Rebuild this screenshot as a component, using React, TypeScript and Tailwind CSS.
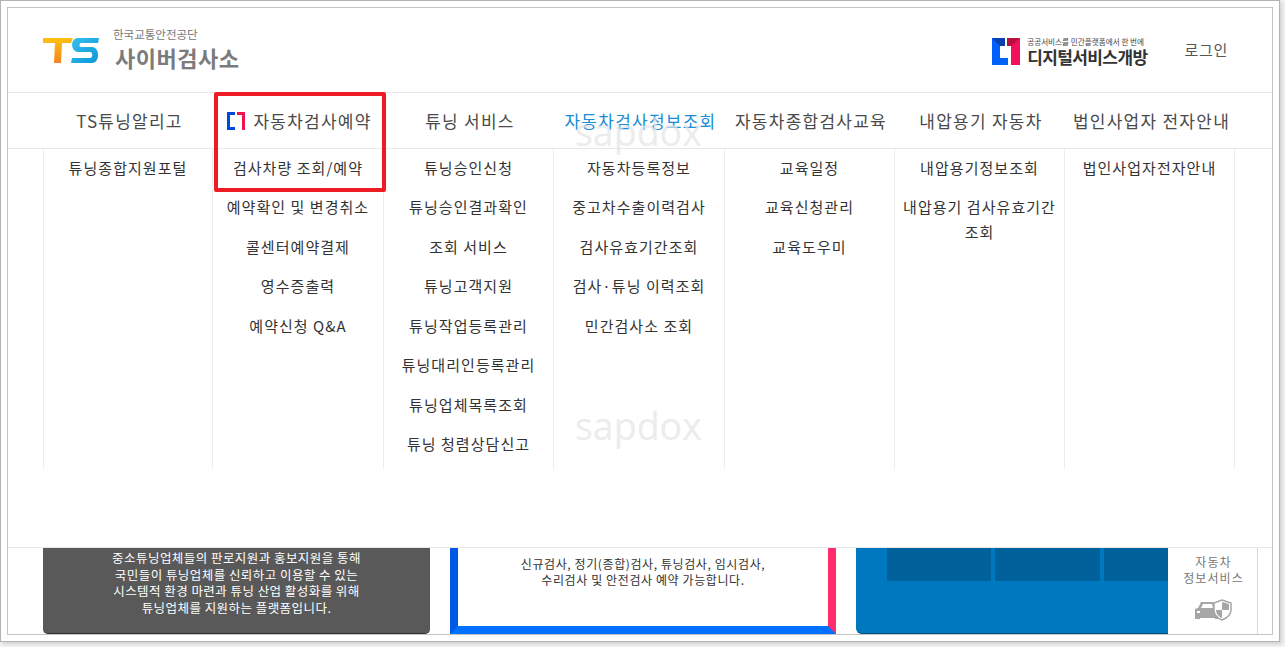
import React from 'react';

const columns = [
  { title: 'TS튜닝알리고', items: ['튜닝종합지원포털'] },
  {
    title: '자동차검사예약',
    items: ['검사차량 조회/예약', '예약확인 및 변경취소', '콜센터예약결제', '영수증출력', '예약신청 Q&A'],
  },
  {
    title: '튜닝 서비스',
    items: ['튜닝승인신청', '튜닝승인결과확인', '조회 서비스', '튜닝고객지원', '튜닝작업등록관리', '튜닝대리인등록관리', '튜닝업체목록조회', '튜닝 청렴상담신고'],
  },
  {
    title: '자동차검사정보조회',
    items: ['자동차등록정보', '중고차수출이력검사', '검사유효기간조회', '검사·튜닝 이력조회', '민간검사소 조회'],
  },
  { title: '자동차종합검사교육', items: ['교육일정', '교육신청관리', '교육도우미'] },
  { title: '내압용기 자동차', items: ['내압용기정보조회', '내압용기 검사유효기간 조회'] },
  { title: '법인사업자 전자안내', items: ['법인사업자전자안내'] },
];

const TsLogo = () => (
  <svg width="56" height="25" viewBox="0 0 56 25" className="shrink-0">
    <defs>
      <linearGradient id="tsT" x1="0" y1="0" x2="0" y2="1">
        <stop offset="0" stopColor="#ffc20e" />
        <stop offset="1" stopColor="#f5821f" />
      </linearGradient>
      <linearGradient id="tsS" x1="0" y1="0" x2="1" y2="1">
        <stop offset="0" stopColor="#39c0ee" />
        <stop offset="1" stopColor="#0a96d8" />
      </linearGradient>
    </defs>
    <path d="M0 0h30l-2 5h-9l-1 20h-7l1-20H0z" fill="url(#tsT)" />
    <path d="M35 0h21l-1 5H38c-2 0-2 4 0 4h11c8 0 8 16 0 16H28l1-5h18c3 0 3-6 0-6H36C27 14 27 0 35 0z" fill="url(#tsS)" />
  </svg>
);

const DigitalLogo = () => (
  <svg width="28" height="27" viewBox="0 0 28 27" className="shrink-0">
    <path d="M0 0h13v8H8v12h8v7H0z" fill="#0061ff" />
    <path d="M0 0h13v8H8z" fill="#0a3fb0" />
    <path d="M15 0h13v27H19V8h-4z" fill="#f2105a" />
    <path d="M15 0h13l-9 8h-4z" fill="#b8103f" />
  </svg>
);

const CarShield = () => (
  <svg width="37" height="22" viewBox="0 0 37 22">
    <path d="M0 10l3-1 3-6h13l2 3c-2 4-1 9 3 13v1H20v-1H5v1H0z" fill="#a6a6a6" />
    <path d="M8 5h9l1 4H6z" fill="#fff" />
    <path d="M2 12h3v2H2z" fill="#fff" />
    <path d="M27 1l9 3v7c0 5-4 8-9 10-5-2-8-5-8-10V4z" fill="#fff" stroke="#a6a6a6" strokeWidth="1.5" />
    <path d="M27 3l7 2v6h-7zM27 11v8c-3-1-6-4-6-8z" fill="#a6a6a6" />
  </svg>
);

export default function App() {
  return (
    <div className="relative h-[647px] w-[1285px] overflow-hidden bg-[#f3f3f3] font-['Noto_Sans_CJK_KR','Noto_Sans',sans-serif]">
      <div className="h-[642px] w-[1280px] border border-[#b4b4b4] bg-white p-[6px] shadow-[2px_2px_4px_rgba(0,0,0,0.15)]">
        <div className="flex h-full flex-col border border-[#c4c4c4]">
          {/* Header */}
          <header className="flex h-[85px] items-center justify-between border-b border-[#e8e8e8] pl-[35px] pr-[44px]">
            <div className="flex items-center gap-[14px]">
              <TsLogo />
              <div className="flex flex-col pb-[3px]">
                <span className="text-[11.5px] leading-[14px] text-[#777777]">한국교통안전공단</span>
                <span className="ml-[2px] mt-[3px] text-[22px] font-bold leading-[26px] tracking-[0.5px] text-[#7b7b7b]">사이버검사소</span>
              </div>
            </div>
            <div className="flex items-center gap-[37px]">
              <div className="mt-[3px] flex items-center gap-[7px]">
                <DigitalLogo />
                <div className="flex flex-col">
                  <span className="text-[7.6px] leading-[10px] text-[#444444]">공공서비스를 민간플랫폼에서 한 번에</span>
                  <span className="text-[17px] font-bold leading-[20px] tracking-[-0.6px] text-[#333333]">디지털서비스개방</span>
                </div>
              </div>
              <span className="text-[15px] tracking-[0.7px] text-[#555555]">로그인</span>
            </div>
          </header>

          {/* Nav */}
          <nav className="ml-[37px] grid h-[55px] grid-cols-[169px_171px_170px_171px_170px_170px_171px] items-center pt-[1px]">
            {columns.map((col, i) => (
              <div
                key={col.title}
                className={`flex items-center justify-center gap-[8px] whitespace-nowrap text-[17px] tracking-[1.25px] ${i === 3 ? 'text-[#1a8cd8]' : 'text-[#4a4a4a]'}`}
              >
                {i === 1 && (
                  <svg width="18" height="18" viewBox="0 0 18 18">
                    <path d="M0 0h8v3H3v12h5v3H0z" fill="#0047e0" />
                    <path d="M10 0h8v18h-3V3h-5z" fill="#f0134f" />
                  </svg>
                )}
                {col.title}
              </div>
            ))}
          </nav>

          {/* Submenus */}
          <div className="border-t border-[#e8e8e8]">
            <div className="ml-[35px] grid h-[320px] grid-cols-[169px_171px_170px_171px_170px_170px_171px]">
              {columns.map((col, i) => (
                <ul
                  key={col.title}
                  className={`flex flex-col gap-[14.5px] border-l border-[#ececec] px-[8px] pt-[5.5px] text-center text-[15px] leading-[25px] tracking-[1.05px] text-[#333333] ${i === 6 ? 'border-r' : ''}`}
                >
                  {col.items.map((item) => (
                    <li key={item}>{item}</li>
                  ))}
                </ul>
              ))}
            </div>
          </div>

          {/* Bottom cards */}
          <div className="mt-[78px] flex min-h-0 flex-1 border-t border-[#e8e8e8] pl-[35px]">
            <div className="flex w-[387px] flex-col items-center rounded-b-[5px] border-b border-[#333333] bg-[#595959] pt-[2px] text-center text-[12.5px] leading-[16.5px] tracking-[0.45px] text-white">
              <p>중소튜닝업체들의 판로지원과 홍보지원을 통해</p>
              <p>국민들이 튜닝업체를 신뢰하고 이용할 수 있는</p>
              <p>시스템적 환경 마련과 튜닝 산업 활성화를 위해</p>
              <p>튜닝업체를 지원하는 플랫폼입니다.</p>
            </div>
            <div className="ml-[20px] w-[386px] border-x-[8px] border-b-[8px] border-b-[#0070ff] border-l-[#0058e6] border-r-[#ff2d6b] bg-white pt-[8px] text-center text-[12px] leading-[16px] tracking-[0.6px] text-[#333333]">
              <p>신규검사, 정기(종합)검사, 튜닝검사, 임시검사,</p>
              <p>수리검사 및 안전검사 예약 가능합니다.</p>
            </div>
            <div className="ml-[20px] flex w-[312px] gap-[4px] rounded-bl-[6px] border-b border-[#00517f] bg-[#0078c0] pl-[31px]">
              <div className="h-[33px] w-[104px] rounded-b-[2px] bg-[#00619b]" />
              <div className="h-[33px] w-[105px] rounded-b-[2px] bg-[#00619b]" />
              <div className="h-[33px] w-[64px] bg-[#00619b]" />
            </div>
            <div className="flex w-[90px] flex-col items-center border-r border-[#d8d8d8] pl-[2px] pt-[6px] text-center text-[12px] leading-[16px] tracking-[1.1px] text-[#777777]">
              <p>자동차</p>
              <p>정보서비스</p>
              <div className="mt-[13px]">
                <CarShield />
              </div>
            </div>
          </div>
        </div>
      </div>

      {/* Watermark */}
      <span className="absolute left-[575px] top-[108px] font-['Open_Sans',sans-serif] text-[37.5px] leading-[48px] text-[#e4e4e4] opacity-70">sapdox</span>
      <span className="absolute left-[575px] top-[402px] font-['Open_Sans',sans-serif] text-[37.5px] leading-[48px] text-[#e4e4e4] opacity-70">sapdox</span>

      {/* Highlight box */}
      <div className="absolute left-[214px] top-[92px] h-[100px] w-[172px] rounded-[2px] border-[4px] border-[#ed1c24]" />
    </div>
  );
}
